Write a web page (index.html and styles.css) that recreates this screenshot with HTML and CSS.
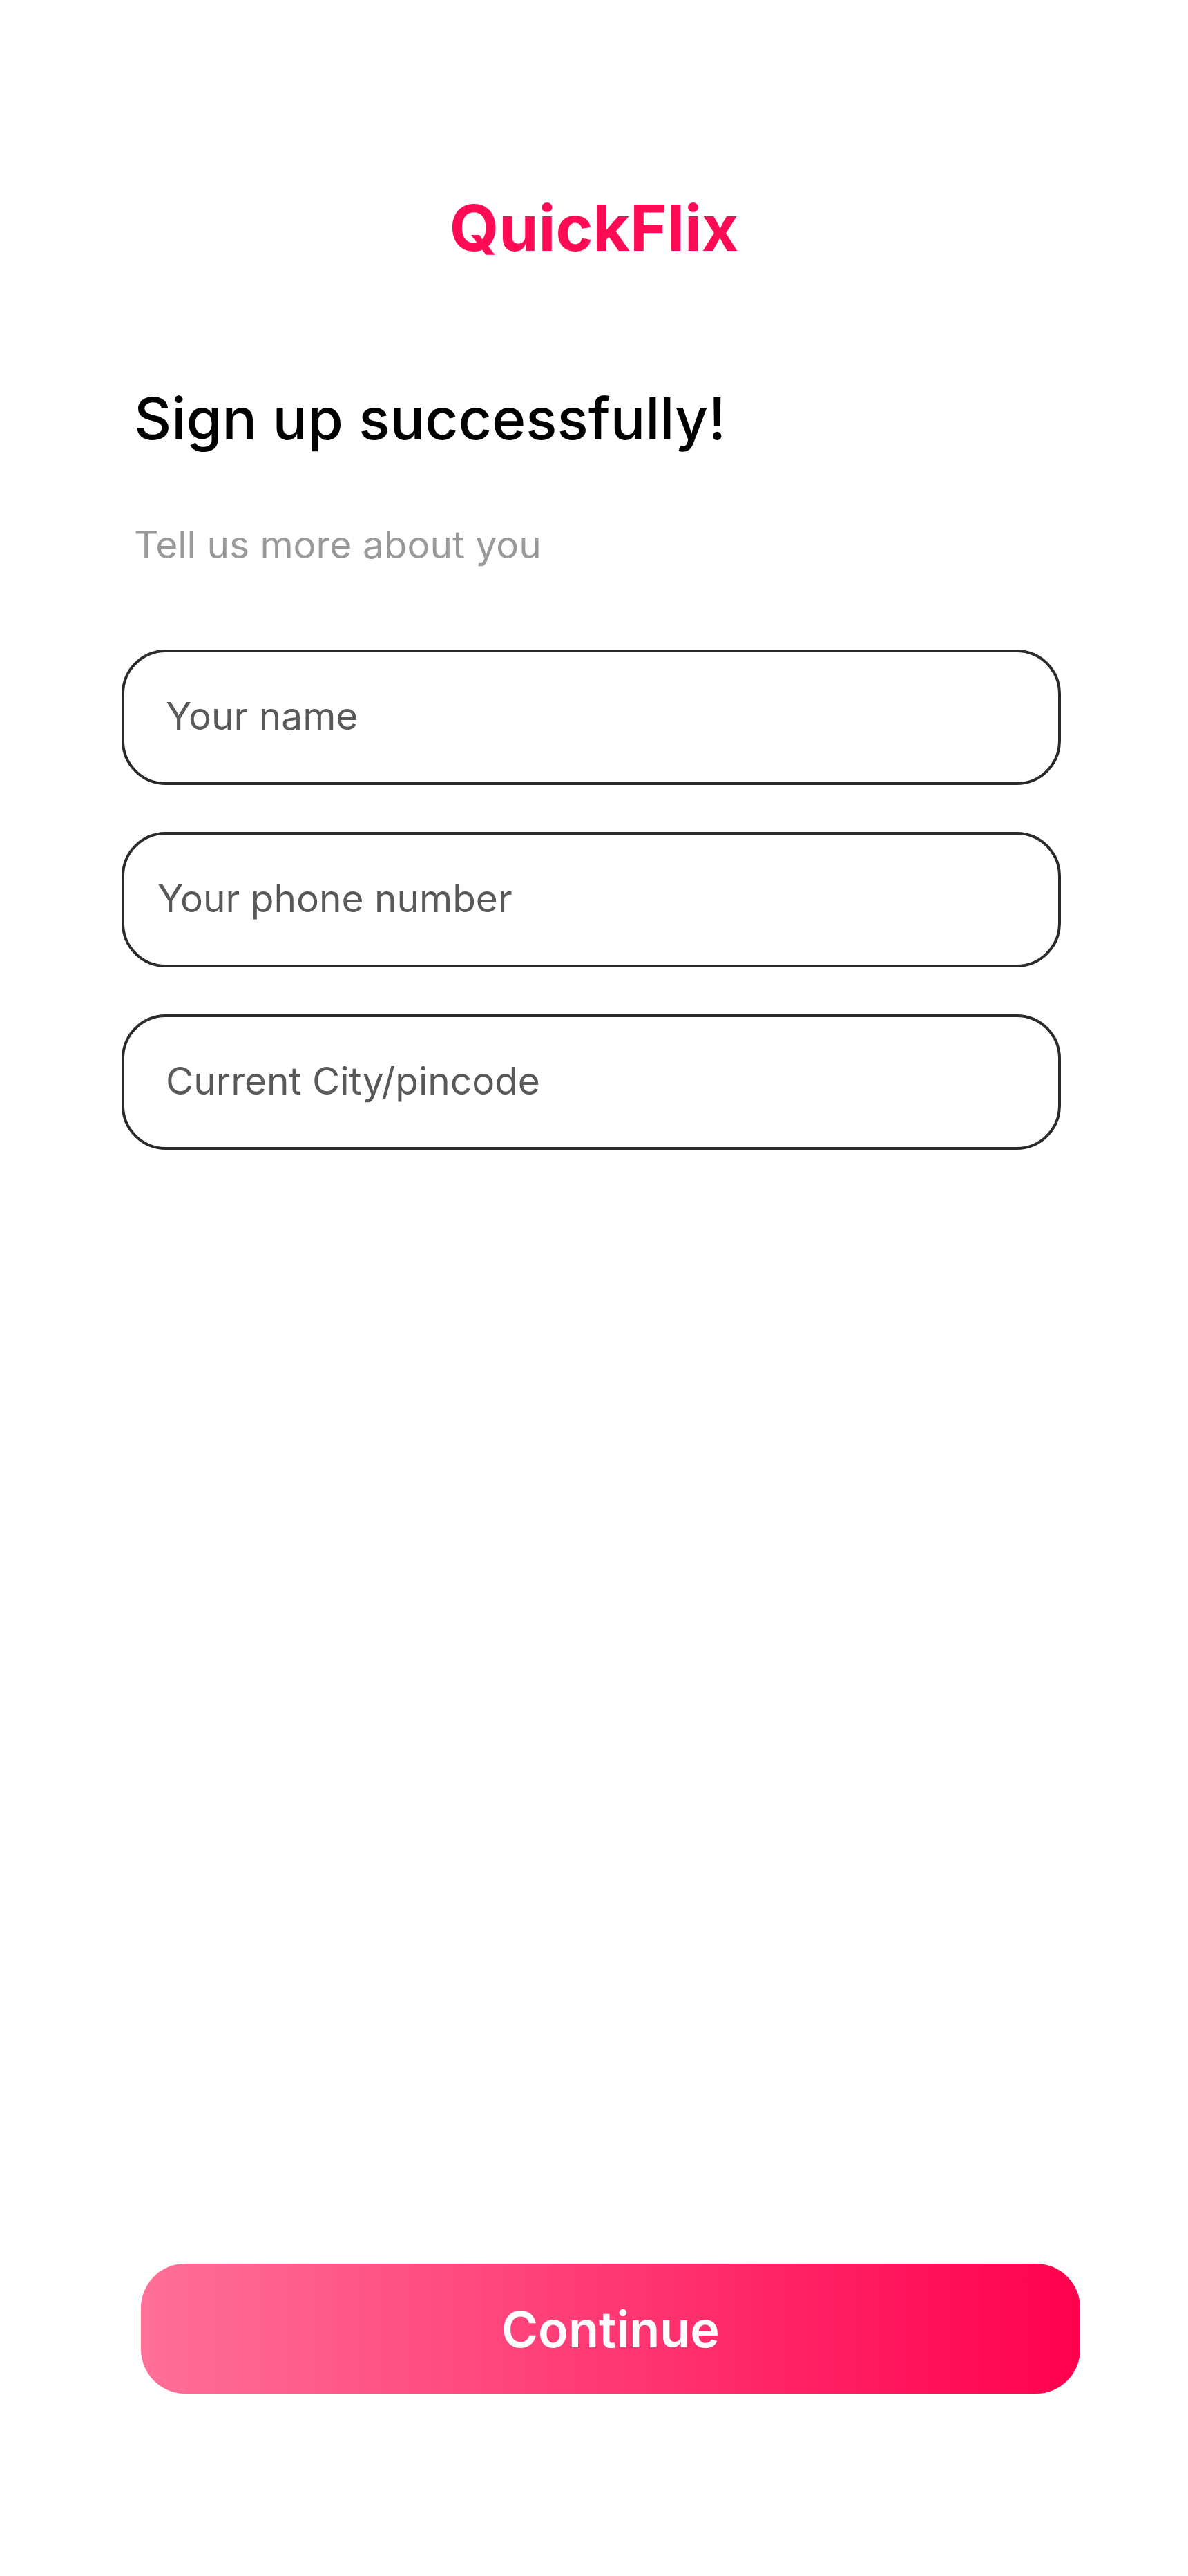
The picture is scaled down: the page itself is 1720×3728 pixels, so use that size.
FILE: index.html
```html
<!DOCTYPE html>
<html lang="en">
<head>
<meta charset="utf-8">
<meta name="viewport" content="width=device-width, initial-scale=1">
<title>QuickFlix</title>
<link rel="stylesheet" href="styles.css">
</head>
<body>
<main class="page">
  <p class="brand">QuickFlix</p>
  <form class="form">
    <h1 class="title">Sign up successfully!</h1>
    <p class="subtitle">Tell us more about you</p>
    <div class="fields">
      <input class="field" type="text" name="name" placeholder="Your name" aria-label="Your name">
      <input class="field field-phone" type="tel" name="phone" placeholder="Your phone number" aria-label="Your phone number">
      <input class="field" type="text" name="city" placeholder="Current City/pincode" aria-label="Current City/pincode">
    </div>
    <button class="continue" type="submit">Continue</button>
  </form>
</main>
</body>
</html>
```
FILE: styles.css
```css
* {
  box-sizing: border-box;
}

body {
  margin: 0;
  background: #fff;
  font-family: Inter, "Liberation Sans", sans-serif;
}

.page {
  display: flex;
  flex-direction: column;
  min-height: 100vh;
  padding: 270px 0 264px;
}

.brand {
  margin: 0;
  color: #ff0a54;
  font-size: 92px;
  font-weight: 700;
  line-height: 120px;
  text-align: center;
}

.form {
  display: flex;
  flex: 1;
  flex-direction: column;
  padding: 0 156px 0 176px;
}

.title {
  margin: 162px 0 0 18px;
  color: #000;
  font-size: 84px;
  font-weight: 500;
  line-height: 108px;
}

.subtitle {
  margin: 92px 0 0 18px;
  color: #999;
  font-size: 55px;
  line-height: 72px;
}

.fields {
  display: flex;
  flex-direction: column;
  gap: 68px;
  margin: 116px 28px 0 0;
}

.field {
  width: 100%;
  height: 196px;
  padding: 0 60px 4px;
  border: 4px solid #2a2a2a;
  border-radius: 64px;
  background: #fff;
  color: #595959;
  font: inherit;
  font-size: 55px;
}

.field-phone {
  padding-left: 48px;
}

.field::placeholder {
  color: #595959;
  opacity: 1;
}

.continue {
  height: 188px;
  margin: auto 0 0 28px;
  border: 0;
  border-radius: 64px;
  background: linear-gradient(90deg, #ff7099, #ff004d);
  color: #fff;
  font: inherit;
  font-size: 72px;
  font-weight: 600;
}
```
